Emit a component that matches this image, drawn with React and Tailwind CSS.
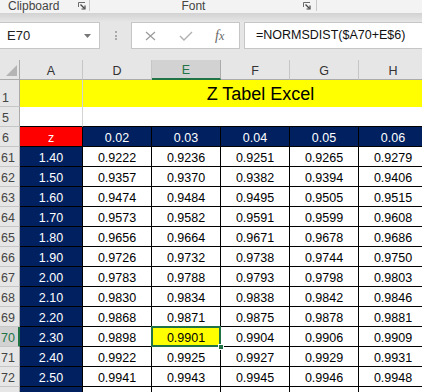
import React from "react";

const cols = ["A", "D", "E", "F", "G", "H"];
const heads = ["0.02", "0.03", "0.04", "0.05", "0.06"];
const rows = [
  [61, "1.40", ["0.9222", "0.9236", "0.9251", "0.9265", "0.9279"]],
  [62, "1.50", ["0.9357", "0.9370", "0.9382", "0.9394", "0.9406"]],
  [63, "1.60", ["0.9474", "0.9484", "0.9495", "0.9505", "0.9515"]],
  [64, "1.70", ["0.9573", "0.9582", "0.9591", "0.9599", "0.9608"]],
  [65, "1.80", ["0.9656", "0.9664", "0.9671", "0.9678", "0.9686"]],
  [66, "1.90", ["0.9726", "0.9732", "0.9738", "0.9744", "0.9750"]],
  [67, "2.00", ["0.9783", "0.9788", "0.9793", "0.9798", "0.9803"]],
  [68, "2.10", ["0.9830", "0.9834", "0.9838", "0.9842", "0.9846"]],
  [69, "2.20", ["0.9868", "0.9871", "0.9875", "0.9878", "0.9881"]],
  [70, "2.30", ["0.9898", "0.9901", "0.9904", "0.9906", "0.9909"]],
  [71, "2.40", ["0.9922", "0.9925", "0.9927", "0.9929", "0.9931"]],
  [72, "2.50", ["0.9941", "0.9943", "0.9945", "0.9946", "0.9948"]],
  [73, "", ["", "", "", "", ""]],
];

function Launcher() {
  return (
    <svg width="8" height="8" viewBox="0 0 8 8" className="block">
      <path d="M0.5 5 V0.5 H7" fill="none" stroke="#6b6b6b" strokeWidth="1" />
      <path d="M2.5 2.5 L6.5 6.5" fill="none" stroke="#444" strokeWidth="1.2" />
      <path d="M7 3.5 V7 H3.5" fill="none" stroke="#444" strokeWidth="1.2" />
    </svg>
  );
}

export default function App() {
  return (
    <div
      className="w-[422px] h-[392px] overflow-hidden bg-[#e6e6e6] relative"
      style={{ fontFamily: '"Liberation Sans", Arial, sans-serif' }}
    >
      {/* Ribbon group labels */}
      <div className="h-[13px] bg-[#f3f3f3] flex items-start text-[12px] leading-[12px] text-[#444]">
        <span className="ml-[8px]">Clipboard</span>
        <div className="ml-[19px] mt-[2px]">
          <Launcher />
        </div>
        <div className="ml-[3px] w-px h-[11px] bg-[#c8c8c8]" />
        <span className="ml-[91px]">Font</span>
        <div className="ml-[98px] mt-[2px]">
          <Launcher />
        </div>
        <div className="ml-[5px] w-px h-[11px] bg-[#c8c8c8]" />
      </div>
      <div className="h-[9px] bg-gradient-to-b from-[#d2d2d2] to-[#e6e6e6]" />

      {/* Formula bar */}
      <div className="h-[27px] flex items-stretch">
        <div className="w-[100px] bg-white border border-l-0 border-[#c6c6c6] flex items-center pl-[7px] pr-[8px] text-[13px] text-[#222]">
          <span className="flex-1">E70</span>
          <svg width="7" height="4" viewBox="0 0 7 4">
            <path d="M0 0 H7 L3.5 4 Z" fill="#777" />
          </svg>
        </div>
        <div className="w-[31px] flex flex-col items-center justify-center gap-[1.5px]">
          <div className="w-[2px] h-[2px] bg-[#aaa]" />
          <div className="w-[2px] h-[2px] bg-[#aaa]" />
          <div className="w-[2px] h-[2px] bg-[#aaa]" />
        </div>
        <div className="w-[109px] bg-white border border-[#c6c6c6] flex items-center">
          <svg width="11" height="10" viewBox="0 0 11 10" className="ml-[13px]">
            <path d="M1 1 L10 9 M10 1 L1 9" stroke="#9a9a9a" strokeWidth="1.2" fill="none" />
          </svg>
          <svg width="14" height="10" viewBox="0 0 14 10" className="ml-[23px]">
            <path d="M1 5 L5 9 L13 1" stroke="#b0b0b0" strokeWidth="1.4" fill="none" />
          </svg>
          <span
            className="ml-[22px] text-[14px] italic text-[#666]"
            style={{ fontFamily: '"Liberation Serif", "Times New Roman", serif' }}
          >
            f<span className="text-[12px]">x</span>
          </span>
        </div>
        <div className="w-[4px]" />
        <div className="flex-1 bg-white border border-r-0 border-[#c6c6c6] flex items-center pl-[11px] text-[12.5px] text-[#111]">
          =NORMSDIST($A70+E$6)
        </div>
      </div>
      <div className="h-[11px]" />

      {/* Grid */}
      <div className="grid grid-cols-[20px_63px_69px_69px_69px_69px_69px] w-[428px] text-[12.5px] leading-[14px]">
        {/* column headers */}
        <div className="h-[20px] bg-[#e6e6e6] border-b border-r border-[#ababab] flex items-end justify-end pr-[2px] pb-[3px]">
          <svg width="11" height="11" viewBox="0 0 11 11">
            <path d="M11 0 V11 H0 Z" fill="#b4b4b4" />
          </svg>
        </div>
        {cols.map((c) =>
          c === "E" ? (
            <div
              key={c}
              className="h-[20px] bg-[#d2d2d2] border-b-2 border-b-[#217346] border-r border-r-[#ababab] flex items-end justify-center pb-[1px] text-[#217346]"
            >
              {c}
            </div>
          ) : (
            <div
              key={c}
              className="h-[20px] bg-[#e6e6e6] border-b border-r border-[#c6c6c6] border-b-[#ababab] flex items-end justify-center pb-[1px] text-[#333]"
            >
              {c}
            </div>
          )
        )}

        {/* row 1 */}
        <div className="h-[27px] bg-[#e6e6e6] border-b border-r border-[#c6c6c6] border-r-[#ababab] flex items-end pl-[2px] pb-[1px] text-[#444]">
          1
        </div>
        <div className="h-[27px] bg-[#ffff00] border-r border-[#d4d4d4]" />
        <div className="col-span-5 h-[27px] bg-[#ffff00] flex items-end justify-center pl-[10px] pb-[4px] text-[18px] leading-[18px] text-black">
          Z Tabel Excel
        </div>

        {/* row 5 */}
        <div className="h-[20px] bg-[#e6e6e6] border-b border-r border-[#c6c6c6] border-r-[#ababab] flex items-end pl-[2px] pb-[1px] text-[#444]">
          5
        </div>
        <div className="h-[20px] bg-white border-r border-r-[#d4d4d4] border-b border-b-black" />
        <div className="col-span-5 h-[20px] bg-white border-b border-b-black" />

        {/* row 6 */}
        <div className="h-[20px] bg-[#e6e6e6] border-b border-r border-[#c6c6c6] border-r-[#ababab] flex items-end pl-[2px] pb-[1px] text-[#444]">
          6
        </div>
        <div className="h-[20px] bg-[#ff0000] border-r border-b border-black flex items-end justify-center pb-[1px] text-white">
          z
        </div>
        {heads.map((h) => (
          <div
            key={h}
            className="h-[20px] bg-[#002060] border-r border-b border-black flex items-end justify-center pb-[1px] text-white"
          >
            {h}
          </div>
        ))}

        {/* data rows */}
        {rows.map(([n, z, vals]) => (
          <React.Fragment key={n}>
            {n === 70 ? (
              <div className="h-[20px] bg-[#d2d2d2] border-b border-b-[#c6c6c6] border-r-2 border-r-[#217346] flex items-end pl-[1px] pb-[1px] text-[#217346]">
                {n}
              </div>
            ) : (
              <div className="h-[20px] bg-[#e6e6e6] border-b border-r border-[#c6c6c6] border-r-[#ababab] flex items-end pl-[1px] pb-[1px] text-[#444]">
                {n === 73 ? "" : n}
              </div>
            )}
            <div className="h-[20px] bg-[#002060] border-r border-b border-black flex items-end justify-center pb-[1px] text-white">
              {z}
            </div>
            {vals.map((v, i) =>
              n === 70 && i === 1 ? (
                <div
                  key={i}
                  className="relative h-[20px] bg-[#ffff00] border-r border-b border-black flex items-end justify-center pb-[1px] text-black"
                >
                  {v}
                  <div className="absolute -left-[1px] -top-[1px] -right-[1px] -bottom-[1px] border-2 border-[#217346] z-10" />
                  <div className="absolute -right-[4px] -bottom-[4px] w-[6px] h-[6px] bg-[#217346] border border-white z-20" />
                </div>
              ) : (
                <div
                  key={i}
                  className="h-[20px] bg-white border-r border-b border-black flex items-end justify-center pb-[1px] text-black"
                >
                  {v}
                </div>
              )
            )}
          </React.Fragment>
        ))}
      </div>
    </div>
  );
}
